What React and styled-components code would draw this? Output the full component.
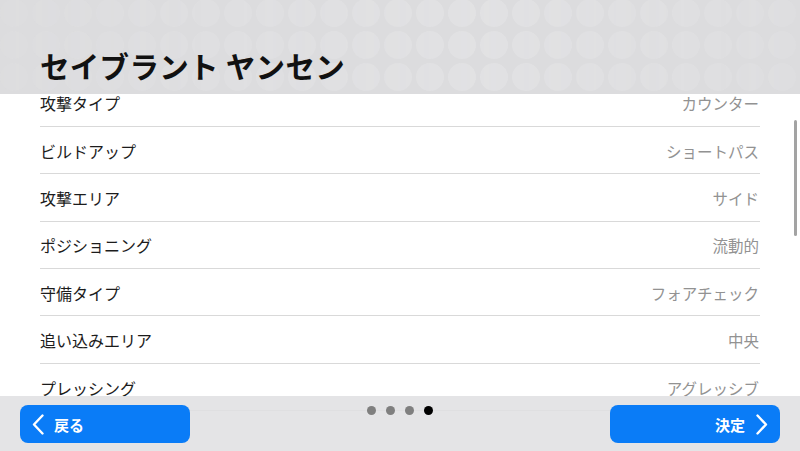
import React from 'react';
import styled, { createGlobalStyle } from 'styled-components';

const GlobalStyle = createGlobalStyle`
  html, body {
    margin: 0;
    padding: 0;
    background: #ffffff;
  }
  body {
    font-family: "Noto Sans CJK JP", "Noto Sans", sans-serif;
  }
`

const Screen = styled.div`
  position: relative;
  width: 800px;
  height: 451px;
  overflow: hidden;
  display: flex;
  flex-direction: column;
  background: #fff;
`

const Header = styled.header`
  position: relative;
  z-index: 2;
  height: 94px;
  flex-shrink: 0;
  background: #dcdcde;
  display: flex;
  align-items: flex-end;
  padding: 0 40px 14px;
  box-sizing: border-box;
  &::before {
    content: '';
    position: absolute;
    inset: 0;
    background-image: radial-gradient(circle at 16px 16px, #e2e2e4 13.5px, transparent 14.5px);
    background-size: 32px 32px;
    background-position: -2px -3px;
    -webkit-mask-image: linear-gradient(to right, rgba(0,0,0,0.2), rgba(0,0,0,0.85) 60%, rgba(0,0,0,0.35));
    mask-image: linear-gradient(to right, rgba(0,0,0,0.2), rgba(0,0,0,0.85) 60%, rgba(0,0,0,0.35));
  }
`

const Title = styled.h1`
  position: relative;
  margin: 0;
  font-size: 29.5px;
  font-weight: 700;
  color: #111;
  letter-spacing: 0.3px;
  line-height: 1;
`

const ListArea = styled.div`
  flex: 1;
  overflow: hidden;
  padding: 0 40px;
`

const List = styled.ul`
  list-style: none;
  margin: -14.5px 0 0;
  padding: 0;
`

const Row = styled.li`
  height: ${p => (p.$tall ? '60px' : '47.4px')};
  box-sizing: border-box;
  display: flex;
  align-items: ${p => (p.$tall ? 'flex-end' : 'center')};
  justify-content: space-between;
  border-bottom: 1px solid #d9d9d9;
  padding-top: 1px;
`

const Label = styled.span`
  font-size: 16px;
  color: #1c1c1c;
`

const Value = styled.span`
  font-size: 15.5px;
  color: #929292;
  margin-right: 1px;
`

const ScrollBar = styled.div`
  position: absolute;
  right: 3px;
  top: 120px;
  width: 3px;
  height: 116px;
  border-radius: 2px;
  background: #a3a3a3;
`

const Footer = styled.footer`
  position: absolute;
  left: 0;
  right: 0;
  bottom: 0;
  z-index: 3;
  height: 55px;
  box-sizing: border-box;
  background: rgba(224, 224, 226, 0.86);
  display: flex;
  justify-content: space-between;
  align-items: flex-start;
  padding: 9px 20px 0;
`

const NavButton = styled.button`
  width: 170px;
  height: 38px;
  border: none;
  border-radius: 8px;
  background: #0a7cf7;
  color: #fff;
  font-family: inherit;
  font-size: 15px;
  font-weight: 700;
  display: flex;
  align-items: center;
  justify-content: ${p => (p.$next ? 'flex-end' : 'flex-start')};
  gap: ${p => (p.$next ? '11px' : '10px')};
  padding: ${p => (p.$next ? '0 12px 0 0' : '0 0 0 12px')};
  box-sizing: border-box;
`

const Dots = styled.div`
  display: flex;
  gap: 10px;
  margin-top: 1px;
`

const Dot = styled.span`
  width: 9px;
  height: 9px;
  border-radius: 50%;
  background: ${p => (p.$active ? '#000' : '#7f7f7f')};
`

const Chevron = ({ dir }) => (
  <svg width="12" height="21" viewBox="0 0 12 21" fill="none">
    <path
      d={dir === 'left' ? 'M10.5 1.5 L2 10.5 L10.5 19.5' : 'M1.5 1.5 L10 10.5 L1.5 19.5'}
      stroke="#fff"
      strokeWidth="2.4"
      strokeLinecap="round"
      strokeLinejoin="round"
    />
  </svg>
)

const rows = [
  ['攻撃タイプ', 'カウンター'],
  ['ビルドアップ', 'ショートパス'],
  ['攻撃エリア', 'サイド'],
  ['ポジショニング', '流動的'],
  ['守備タイプ', 'フォアチェック'],
  ['追い込みエリア', '中央'],
  ['プレッシング', 'アグレッシブ'],
  ['ディフェンス戦術', 'バランス', true],
  ['コンパクトネス', '5'],
]

function App() {
  return (
    <>
      <GlobalStyle />
      <Screen>
        <Header>
          <Title>セイブラント ヤンセン</Title>
        </Header>
        <ListArea>
          <List>
            {rows.map(([label, value, tall]) => (
              <Row key={label} $tall={tall}>
                <Label>{label}</Label>
                <Value>{value}</Value>
              </Row>
            ))}
          </List>
        </ListArea>
        <ScrollBar />
        <Footer>
          <NavButton>
            <Chevron dir="left" />
            戻る
          </NavButton>
          <Dots>
            <Dot />
            <Dot />
            <Dot />
            <Dot $active />
          </Dots>
          <NavButton $next>
            決定
            <Chevron dir="right" />
          </NavButton>
        </Footer>
      </Screen>
    </>
  )
}

export default App;
